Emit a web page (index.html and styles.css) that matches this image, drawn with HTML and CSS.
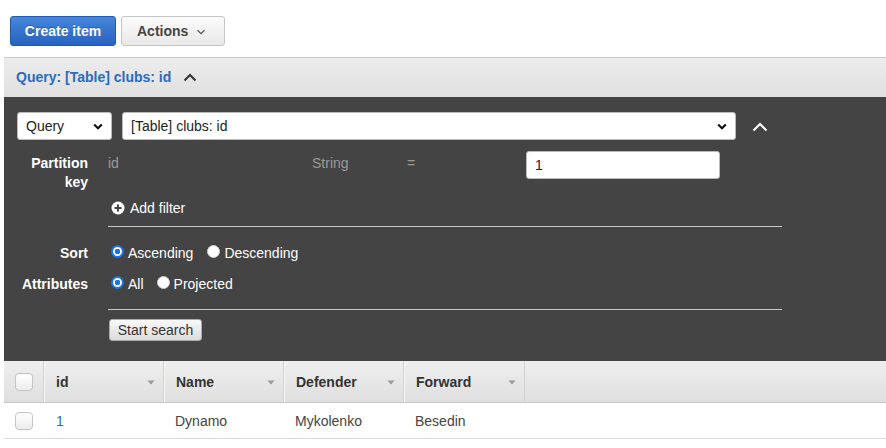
FILE: index.html
```html
<!DOCTYPE html>
<html>
<head>
<meta charset="utf-8">
<link rel="stylesheet" href="styles.css">
</head>
<body>
<div class="page">
  <div class="toolbar">
    <button class="btn btn-primary">Create item</button>
    <button class="btn btn-default">Actions
      <svg class="caret-sm" width="10" height="6" viewBox="0 0 10 6"><path d="M1.5 1.2 L5 4.6 L8.5 1.2" fill="none" stroke="#555" stroke-width="1.3"/></svg>
    </button>
  </div>

  <div class="query-head">
    <span class="query-title">Query: [Table] clubs: id</span>
    <svg class="head-caret" width="14" height="9" viewBox="0 0 14 9"><path d="M1.5 7.5 L7 2 L12.5 7.5" fill="none" stroke="#333" stroke-width="2"/></svg>
  </div>

  <div class="panel">
    <div class="select-row">
      <div class="select select-mode">Query
        <svg class="sel-chev" width="10" height="7" viewBox="0 0 10 7"><path d="M1.2 1.5 L5 5.2 L8.8 1.5" fill="none" stroke="#111" stroke-width="2.2"/></svg>
      </div>
      <div class="select select-index">[Table] clubs: id
        <svg class="sel-chev" width="10" height="7" viewBox="0 0 10 7"><path d="M1.2 1.5 L5 5.2 L8.8 1.5" fill="none" stroke="#111" stroke-width="2.2"/></svg>
      </div>
      <svg class="panel-chev" width="16" height="10" viewBox="0 0 16 10"><path d="M1.5 8.5 L8 2 L14.5 8.5" fill="none" stroke="#fff" stroke-width="2"/></svg>
    </div>

    <div class="form-row row-partition">
      <div class="label">Partition<br>key</div>
      <div class="content partition">
        <span class="pk-name">id</span>
        <span class="pk-type">String</span>
        <span class="pk-op">=</span>
        <div class="text-input">1</div>
      </div>
    </div>

    <div class="form-row row-add">
      <div class="label"></div>
      <div class="content add-filter">
        <svg class="plus" width="14" height="14" viewBox="0 0 14 14"><circle cx="7" cy="7" r="6.5" fill="#fff"/><path d="M7 3.5 V10.5 M3.5 7 H10.5" stroke="#444" stroke-width="2"/></svg>
        <span>Add filter</span>
      </div>
    </div>

    <div class="form-row"><div class="label"></div><div class="content"><div class="rule"></div></div></div>

    <div class="form-row row-sort">
      <div class="label">Sort</div>
      <div class="content radios">
        <label class="radio"><span class="dot checked"></span>Ascending</label>
        <label class="radio"><span class="dot"></span>Descending</label>
      </div>
    </div>

    <div class="form-row row-attr">
      <div class="label">Attributes</div>
      <div class="content radios">
        <label class="radio"><span class="dot checked"></span>All</label>
        <label class="radio"><span class="dot"></span>Projected</label>
      </div>
    </div>

    <div class="form-row row-rule2"><div class="label"></div><div class="content"><div class="rule"></div></div></div>

    <div class="form-row row-search">
      <div class="label"></div>
      <div class="content"><button class="btn-search">Start search</button></div>
    </div>
  </div>

  <div class="table">
    <div class="thead">
      <div class="cell cell-check"><span class="checkbox"></span></div>
      <div class="cell col"><span>id</span><svg class="sort" width="8" height="5" viewBox="0 0 8 5"><path d="M0.5 0.5 H7.5 L4 4.5 Z" fill="#9a9a9a"/></svg></div>
      <div class="cell col"><span>Name</span><svg class="sort" width="8" height="5" viewBox="0 0 8 5"><path d="M0.5 0.5 H7.5 L4 4.5 Z" fill="#9a9a9a"/></svg></div>
      <div class="cell col"><span>Defender</span><svg class="sort" width="8" height="5" viewBox="0 0 8 5"><path d="M0.5 0.5 H7.5 L4 4.5 Z" fill="#9a9a9a"/></svg></div>
      <div class="cell col col-last"><span>Forward</span><svg class="sort" width="8" height="5" viewBox="0 0 8 5"><path d="M0.5 0.5 H7.5 L4 4.5 Z" fill="#9a9a9a"/></svg></div>
      <div class="cell filler"></div>
    </div>
    <div class="trow">
      <div class="cell cell-check"><span class="checkbox"></span></div>
      <div class="cell col"><a class="link">1</a></div>
      <div class="cell col">Dynamo</div>
      <div class="cell col">Mykolenko</div>
      <div class="cell col">Besedin</div>
    </div>
  </div>
</div>
</body>
</html>
```

FILE: styles.css
```css
* { box-sizing: border-box; }
html, body { margin: 0; padding: 0; background: #fff; }
body {
  font-family: "Liberation Sans", Arial, sans-serif;
  font-size: 14px;
  color: #444;
  width: 886px;
  height: 448px;
  overflow: hidden;
}
.page { padding-left: 4px; }

.toolbar {
  display: flex;
  gap: 5px;
  padding: 16px 0 0 6px;
  height: 57px;
}
.btn {
  height: 30px;
  border-radius: 3px;
  font-family: inherit;
  font-size: 14px;
  font-weight: bold;
  display: flex;
  align-items: center;
  padding: 0;
  cursor: pointer;
}
.btn-primary {
  width: 106px;
  justify-content: center;
  color: #fff;
  background: linear-gradient(#4686da, #2862c0);
  border: 1px solid #2259b0;
  text-shadow: 0 -1px 0 rgba(0,0,0,0.25);
}
.btn-default {
  width: 104px;
  padding-left: 15px;
  color: #444;
  background: linear-gradient(#fbfbfb, #e9e9e9);
  border: 1px solid #c6c6c6;
}
.caret-sm { margin-left: 8px; margin-top: 2px; }

.query-head {
  height: 40px;
  border-top: 1px solid #cacaca;
  background: linear-gradient(#ececec, #e0e0e0);
  display: flex;
  align-items: center;
  padding-left: 12px;
  padding-bottom: 1px;
}
.query-title { color: #2a6bc2; font-weight: bold; }
.head-caret { margin-left: 12px; margin-top: 1px; }

.panel {
  background: #444;
  height: 264px;
  padding-top: 15px;
  color: #fff;
}
.select-row {
  display: flex;
  align-items: center;
  padding-left: 13px;
  height: 28px;
}
.select {
  height: 28px;
  background: #fff;
  border: 1px solid #bbb;
  border-radius: 3px;
  color: #222;
  display: flex;
  align-items: center;
  justify-content: space-between;
  padding: 0 8px 0 8px;
}
.select-mode { width: 95px; }
.select-index { width: 614px; margin-left: 10px; }
.sel-chev { flex: none; }
.panel-chev { margin-left: 16px; margin-top: 1px; }

.form-row { display: flex; }
.label {
  width: 84px;
  flex: none;
  text-align: right;
  font-weight: bold;
  color: #fff;
  line-height: 19px;
}
.content {
  margin-left: 20px;
  flex: none;
  width: 674px;
}
.row-partition { margin-top: 11px; height: 40px; }
.row-partition .label { padding-top: 3px; }
.partition { display: flex; align-items: flex-start; }
.partition span { color: #9a9a9a; line-height: 19px; padding-top: 3px; }
.pk-name { width: 204px; }
.pk-type { width: 95px; }
.pk-op { width: 119px; }
.text-input {
  width: 194px;
  height: 28px;
  background: #fff;
  border: 1px solid #bbb;
  border-radius: 3px;
  color: #222;
  padding-left: 8px;
  line-height: 26px;
}

.row-add { margin-top: 7px; height: 20px; }
.add-filter { display: flex; align-items: center; padding-left: 3px; }
.plus { margin-right: 5px; }

.rule { height: 1px; background: #c8c8c8; }
.row-add + .form-row { margin-top: 8px; }

.row-sort { margin-top: 16px; height: 20px; align-items: center; }
.row-attr { margin-top: 11px; height: 20px; align-items: center; }
.radios { display: flex; align-items: center; padding-left: 3px; }
.radio { display: flex; align-items: center; margin-right: 14px; }
.row-attr .radio { margin-right: 13px; }
.dot {
  width: 13px;
  height: 13px;
  border-radius: 50%;
  background: #fff;
  border: 1px solid #cfcfcf;
  margin-right: 4px;
  margin-top: -3px;
  flex: none;
}
.dot.checked {
  border: 2px solid #1a73e8;
  background: radial-gradient(circle, #1a73e8 0 2.6px, #fff 3px);
}

.row-rule2 { margin-top: 15px; }
.row-search { margin-top: 9px; }
.btn-search {
  margin-left: 1px;
  width: 93px;
  height: 22px;
  font-family: inherit;
  font-size: 14px;
  color: #333;
  background: linear-gradient(#f9f9f9, #dcdcdc);
  border: 1px solid #aaa;
  border-radius: 3px;
  padding: 0;
}

.table { width: 882px; }
.thead {
  display: flex;
  height: 42px;
  background: linear-gradient(#efefef, #dfdfdf);
  border-bottom: 1px solid #c8c8c8;
  font-weight: bold;
  color: #333;
}
.cell { display: flex; align-items: center; flex: none; }
.cell-check { width: 39px; padding-left: 11px; }
.checkbox {
  width: 18px;
  height: 18px;
  border: 1px solid #c4c4c4;
  border-radius: 4px;
  background: linear-gradient(#fff, #ececec);
}
.col {
  width: 120px;
  padding-left: 12px;
  padding-right: 8px;
  justify-content: space-between;
}
.thead .col {
  border-left: 1px solid #d2d2d2;
  box-shadow: inset 1px 0 0 #f7f7f7;
}
.thead .col-last { width: 122px; border-right: 1px solid #d2d2d2; }
.sort { margin-top: 2px; }
.filler { flex: 1; }
.trow {
  display: flex;
  height: 36px;
  border-bottom: 1px solid #dcdcdc;
  color: #444;
}
.trow .col:nth-child(2) { padding-left: 13px; }
.trow .col:nth-child(3), .trow .col:nth-child(4), .trow .col:nth-child(5) { padding-left: 12px; }
.link { color: #2a6bc2; }
```
